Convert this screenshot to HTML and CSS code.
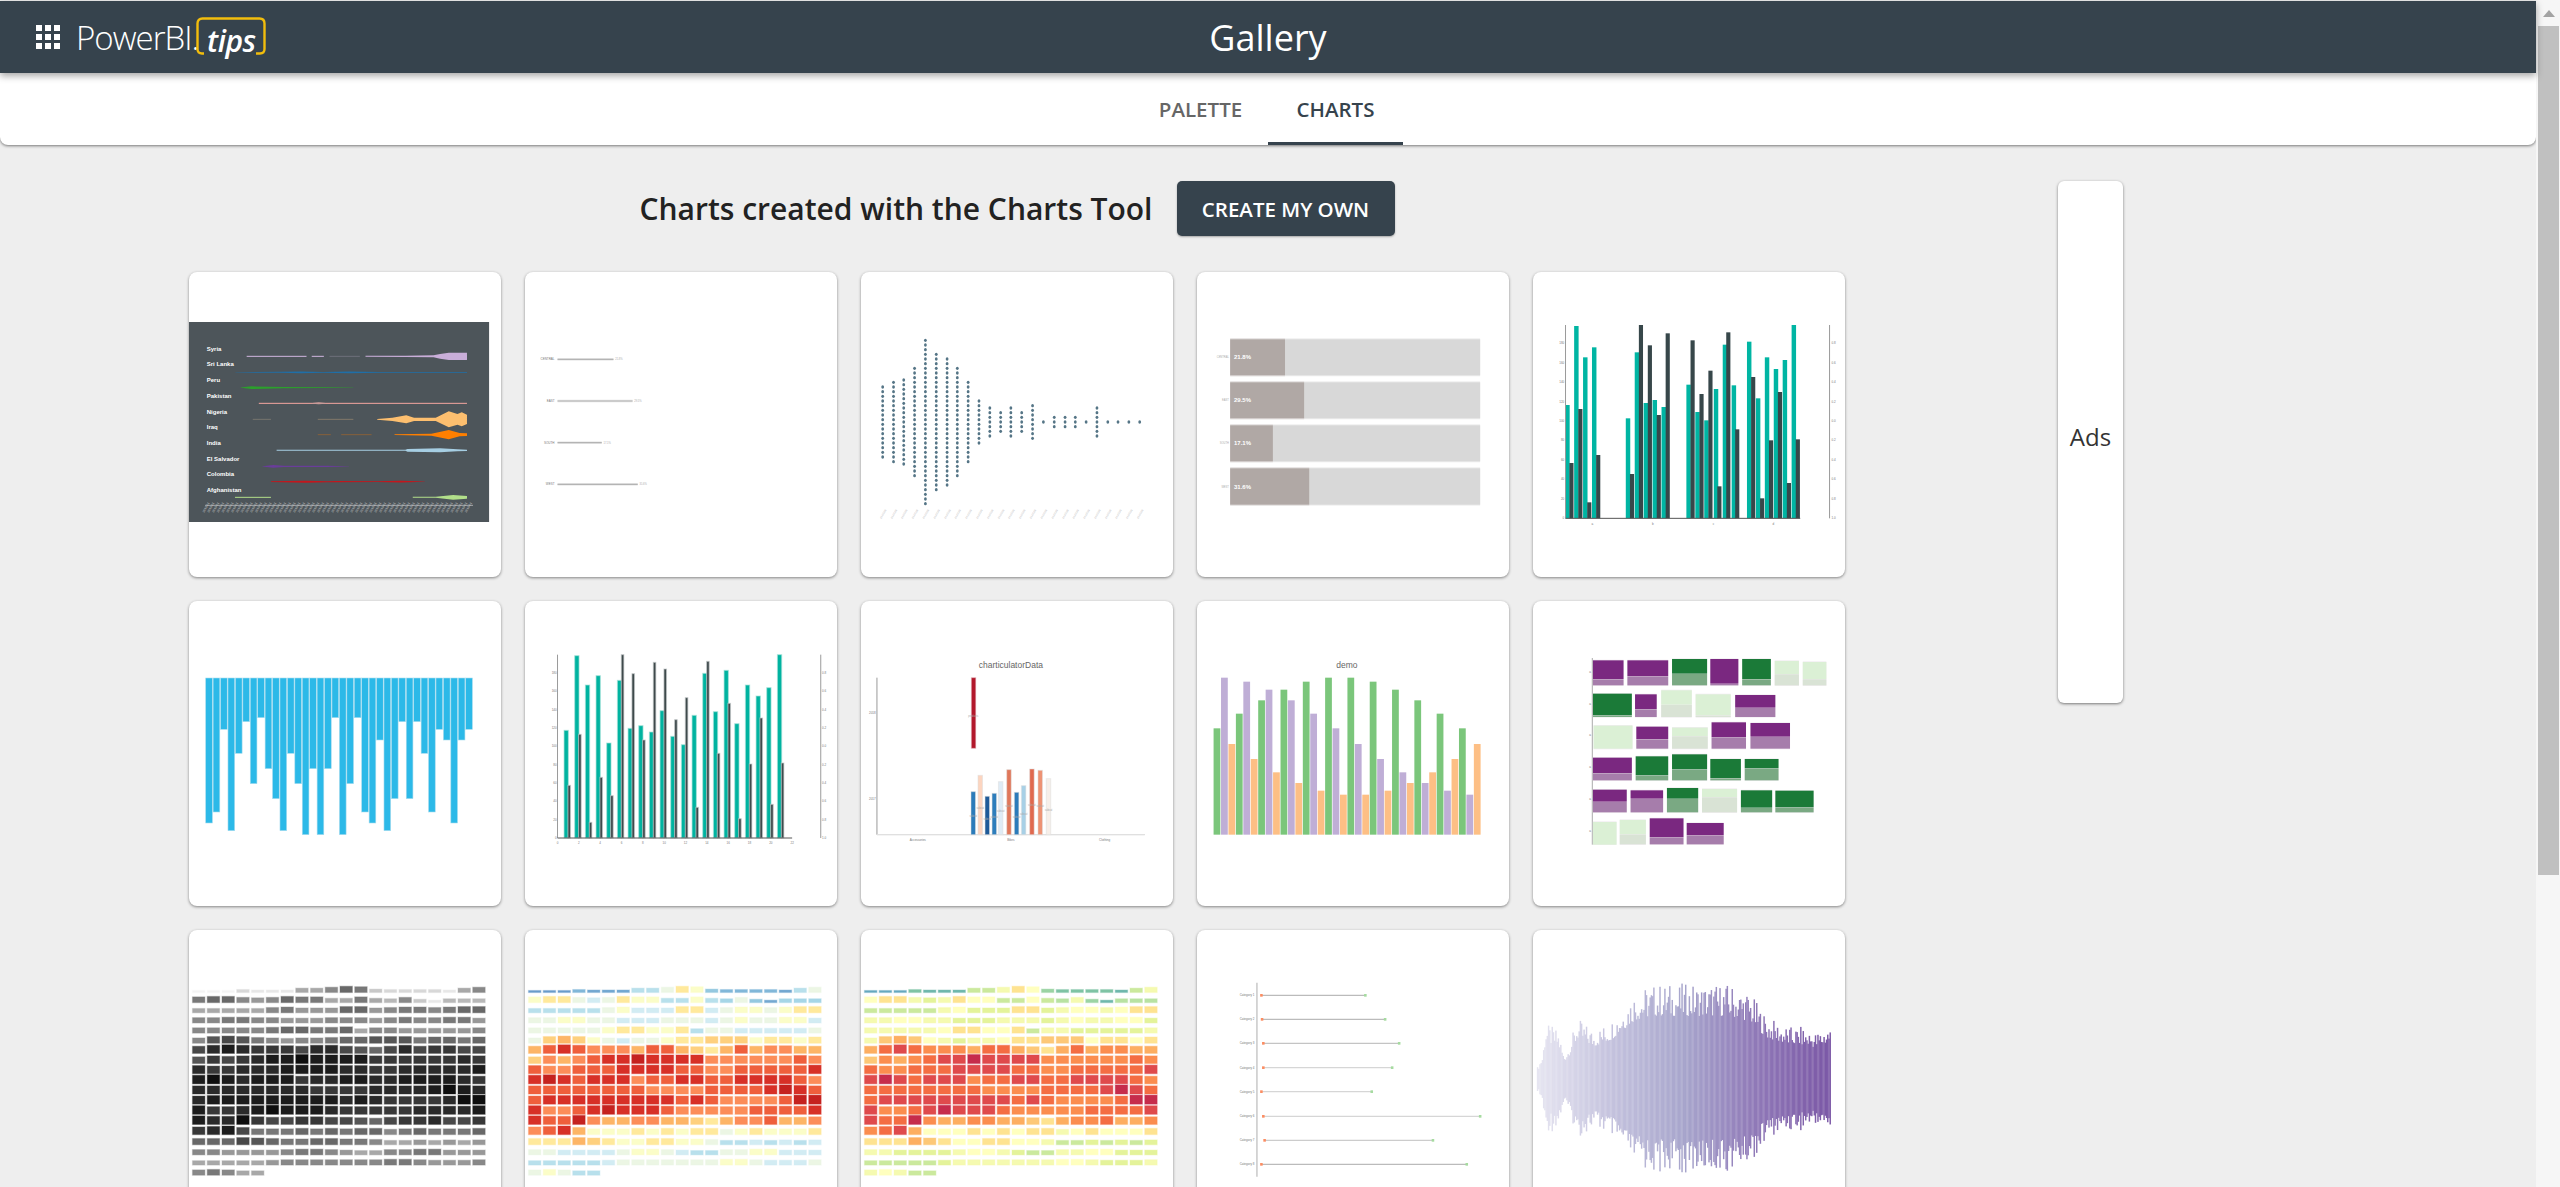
FILE: index.html
```html
<!DOCTYPE html>
<html>
<head lang="en">
    <meta charset="UTF-8">
    <title>Gallery</title>
    <link rel="stylesheet" href="styles.css">
</head>
<body>
<div class="shell">
    <div class="page">
        <header class="topbar">
            <div class="brand">
                <svg class="apps" viewBox="0 0 24 24">
                    <rect x="0" y="0" width="6" height="6"/><rect x="9" y="0" width="6" height="6"/><rect x="18" y="0" width="6" height="6"/>
                    <rect x="0" y="9" width="6" height="6"/><rect x="9" y="9" width="6" height="6"/><rect x="18" y="9" width="6" height="6"/>
                    <rect x="0" y="18" width="6" height="6"/><rect x="9" y="18" width="6" height="6"/><rect x="18" y="18" width="6" height="6"/>
                </svg>
                <span class="brand-name">PowerBI.</span>
                <span class="brand-tips">
                    <svg class="bracket" viewBox="0 0 70 38">
                        <path d="M8 36.5 H6 Q1.5 36.5 1.5 32 V6.5 Q1.5 1.5 6.5 1.5 H63.5 Q68.5 1.5 68.5 6.5 V32 Q68.5 36.5 64 36.5 H60"/>
                    </svg>
                    tips
                </span>
            </div>
            <h1 class="title">Gallery</h1>
            <div></div>
        </header>
        <nav class="tabbar">
            <a class="tab">PALETTE</a>
            <a class="tab active">CHARTS</a>
        </nav>
        <div class="content">
            <main class="gallery">
                <div class="intro">
                    <h2>Charts created with the Charts Tool</h2>
                    <a class="btn">CREATE MY OWN</a>
                </div>
                <div class="cards">
                    <div class="card"><svg class="chart" id="chart1" viewBox="0 0 312 305"></svg></div>
                    <div class="card"><svg class="chart" id="chart2" viewBox="0 0 312 305"></svg></div>
                    <div class="card"><svg class="chart" id="chart3" viewBox="0 0 312 305"></svg></div>
                    <div class="card"><svg class="chart" id="chart4" viewBox="0 0 312 305"></svg></div>
                    <div class="card"><svg class="chart" id="chart5" viewBox="0 0 312 305"></svg></div>
                    <div class="card"><svg class="chart" id="chart6" viewBox="0 0 312 305"></svg></div>
                    <div class="card"><svg class="chart" id="chart7" viewBox="0 0 312 305"></svg></div>
                    <div class="card"><svg class="chart" id="chart8" viewBox="0 0 312 305"></svg></div>
                    <div class="card"><svg class="chart" id="chart9" viewBox="0 0 312 305"></svg></div>
                    <div class="card"><svg class="chart" id="chart10" viewBox="0 0 312 305"></svg></div>
                    <div class="card"><svg class="chart" id="chart11" viewBox="0 0 312 305"></svg></div>
                    <div class="card"><svg class="chart" id="chart12" viewBox="0 0 312 305"></svg></div>
                    <div class="card"><svg class="chart" id="chart13" viewBox="0 0 312 305"></svg></div>
                    <div class="card"><svg class="chart" id="chart14" viewBox="0 0 312 305"></svg></div>
                    <div class="card"><svg class="chart" id="chart15" viewBox="0 0 312 305"></svg></div>
                </div>
            </main>
            <aside class="ads">Ads</aside>
        </div>
    </div>
    <div class="scrollbar">
        <div class="scroll-up"></div>
        <div class="scroll-thumb"></div>
    </div>
</div>
<script src="charts.js"></script>
</body>
</html>
```

FILE: styles.css
```css
*{
    margin:0;
    padding:0;
    box-sizing:border-box;
}
body{
    background:#eee;
    font-family:"Open Sans","Liberation Sans",sans-serif;
    overflow:hidden;
}
.shell{
    display:flex;
    height:100vh;
    overflow:hidden;
}
.page{
    flex:1;
    min-width:0;
    padding-top:1px;
}

/* top bar */
.topbar{
    height:72px;
    background:#36434d;
    color:#fff;
    display:grid;
    grid-template-columns:1fr auto 1fr;
    align-items:center;
    position:relative;
    z-index:2;
    box-shadow:0 3px 7px rgba(0,0,0,.35);
}
.brand{
    display:flex;
    align-items:center;
    padding-left:36px;
}
.apps{
    width:24px;
    height:24px;
    fill:#fff;
    margin-right:16px;
}
.brand-name{
    font-size:33px;
    font-weight:300;
    letter-spacing:-1px;
}
.brand-tips{
    position:relative;
    width:70px;
    height:38px;
    margin:-3px 0 0 -2px;
    font-size:30px;
    font-style:italic;
    font-weight:600;
    line-height:48px;
    text-align:center;
    letter-spacing:-.5px;
}
.bracket{
    position:absolute;
    left:0;
    top:0;
    width:70px;
    height:38px;
    fill:none;
    stroke:#f2bd0c;
    stroke-width:2.4;
}
.title{
    font-size:36px;
    font-weight:400;
}

/* tabs */
.tabbar{
    height:72px;
    background:#fff;
    border-radius:0 0 8px 8px;
    box-shadow:0 1px 3px rgba(0,0,0,.5);
    display:flex;
    justify-content:center;
}
.tab{
    width:135px;
    display:flex;
    align-items:center;
    justify-content:center;
    padding-top:2px;
    font-size:20.5px;
    font-weight:600;
    color:#666;
    border-bottom:3px solid transparent;
}
.tab.active{
    color:#36434d;
    border-bottom-color:#36434d;
}

/* gallery */
.content{
    display:flex;
    align-items:flex-start;
    gap:213px;
    padding:36px 0 0 189px;
}
.gallery{
    width:1656px;
    flex:none;
}
.intro{
    display:flex;
    align-items:center;
    justify-content:center;
    gap:24px;
    height:55px;
    margin-bottom:36px;
}
.intro h2{
    font-size:30px;
    font-weight:600;
    color:#222;
}
.btn{
    width:218px;
    height:55px;
    display:flex;
    align-items:center;
    justify-content:center;
    background:#36434d;
    color:#fff;
    font-size:20.5px;
    font-weight:600;
    border-radius:5px;
    box-shadow:0 1px 2px rgba(0,0,0,.3);
}
.cards{
    display:grid;
    grid-template-columns:repeat(5,312px);
    grid-auto-rows:305px;
    gap:24px;
}
.card{
    background:#fff;
    border-radius:8px;
    box-shadow:0 1px 3px rgba(0,0,0,.45);
    overflow:hidden;
}
.chart{
    display:block;
    width:312px;
    height:305px;
}
.chart text{
    font-family:"Liberation Sans",sans-serif;
    fill:#777;
    font-size:3px;
}
.chart text.dark-label{
    fill:#fff;
    font-size:6px;
    font-weight:700;
}
.chart text.tick-white{
    fill:#ddd;
    font-size:3px;
}
.chart text.value{
    fill:#fff;
    font-size:6px;
    font-weight:700;
}
.chart text.faint{
    fill:#aaa;
    font-size:2.6px;
}
.chart text.heading{
    fill:#666;
    font-size:8.5px;
}
.ads{
    width:65px;
    height:522px;
    flex:none;
    display:flex;
    align-items:center;
    justify-content:center;
    padding-bottom:12px;
    background:#fff;
    color:#333;
    font-size:24px;
    border-radius:6px;
    box-shadow:0 1px 3px rgba(0,0,0,.5);
}

/* scrollbar drawn by hand, the screenshot has one */
.scrollbar{
    width:24px;
    flex:none;
    background:#f6f6f6;
    padding-left:2px;
    padding-right:1px;
}
.scroll-up{
    height:26px;
    display:flex;
    justify-content:center;
    padding-top:10px;
}
.scroll-up:before{
    content:"";
    height:0;
    border-left:6px solid transparent;
    border-right:6px solid transparent;
    border-bottom:7px solid #a3a3a3;
}
.scroll-thumb{
    height:849px;
    background:#c0c0c0;
}
```

FILE: charts.js
```js
// small drawing helper, coordinates are the ones read from the reference
function Pen(ox, oy, sx){
    this.ox = ox;
    this.oy = oy;
    this.sx = sx;
    this.out = '';
}
Pen.prototype.x = function(z){
    return +((z - this.ox) / this.sx).toFixed(2);
};
Pen.prototype.y = function(z){
    return +((z - this.oy) / 3).toFixed(2);
};
Pen.prototype.rect = function(x0, y0, x1, y1, fill, stroke, opacity, sw){
    this.out += '<rect x="' + this.x(x0) + '" y="' + this.y(y0) + '" width="' + ((x1 - x0) / this.sx).toFixed(2) +
        '" height="' + ((y1 - y0) / 3).toFixed(2) + '" fill="' + fill + '"' +
        (stroke ? ' stroke="' + stroke + '" stroke-width="' + (sw || 1) + '"' + (opacity ? ' stroke-opacity="' + opacity + '"' : '') : '') + '/>';
};
Pen.prototype.line = function(x0, y0, x1, y1, color, w){
    this.out += '<line x1="' + this.x(x0) + '" y1="' + this.y(y0) + '" x2="' + this.x(x1) + '" y2="' + this.y(y1) +
        '" stroke="' + color + '" stroke-width="' + (w || 1) + '"/>';
};
Pen.prototype.text = function(x, y, str, cls, anchor, rot){
    var px = this.x(x), py = this.y(y);
    this.out += '<text x="' + px + '" y="' + py + '"' + (cls ? ' class="' + cls + '"' : '') +
        (anchor ? ' text-anchor="' + anchor + '"' : '') +
        (rot ? ' transform="rotate(' + rot + ' ' + px + ' ' + py + ')"' : '') + '>' + str + '</text>';
};
// shape mirrored round a horizontal line
Pen.prototype.violin = function(y, pts, color, opacity){
    var top = [], bottom = [], i;
    for(i = 0; i < pts.length; i++){
        top.push(this.x(pts[i][0]) + ',' + this.y(y - pts[i][1]));
        bottom.unshift(this.x(pts[i][0]) + ',' + this.y(y + pts[i][1]));
    }
    this.out += '<polygon points="' + top.concat(bottom).join(' ') + '" fill="' + color + '"' +
        (opacity ? ' opacity="' + opacity + '"' : '') + '/>';
};
Pen.prototype.done = function(id){
    document.getElementById(id).innerHTML = this.out;
};

function noise(i){
    var s = Math.sin(i * 12.9898) * 43758.5453;
    return s - Math.floor(s);
}

// violins on dark
function chart1(){
    var p = new Pen(21, 36, 2.306), i;
    p.rect(21, 186, 713, 786, '#4d555a');
    var names = [['Syria', 267], ['Sri Lanka', 311], ['Peru', 359], ['Pakistan', 407], ['Nigeria', 455],
        ['Iraq', 500], ['India', 548], ['El Salvador', 596], ['Colombia', 641], ['Afghanistan', 690]];
    for(i = 0; i < names.length; i++){
        p.text(62, names[i][1] + 6, names[i][0], 'dark-label');
    }
    // syria
    p.line(154, 289, 292, 289, '#d0b6e0', 1);
    p.line(304, 289, 332, 289, '#d0b6e0', 1);
    p.line(345, 289, 415, 289, '#8f8a9a', .5);
    p.violin(289, [[428, 1.5], [520, 2], [585, 3], [600, 7], [620, 11], [662, 11]], '#c9aed9');
    // sri lanka
    p.violin(337, [[128, .5], [230, 1.5], [280, 2.5], [330, 1], [390, 2.5], [460, 1], [662, 1]], '#1f6fa8');
    // peru
    p.violin(383, [[140, .5], [165, 4], [240, 2], [330, 1], [400, .2]], '#2ca02c');
    // pakistan
    p.line(182, 430, 662, 430, '#f4a6a0', 1);
    p.violin(430, [[305, 1], [320, 3], [336, 1]], '#c99a98');
    // nigeria
    p.line(168, 478, 210, 478, '#8a8478', .7);
    p.line(318, 478, 400, 478, '#9a8a72', .7);
    p.violin(478, [[455, 1], [490, 5], [522, 12], [540, 5], [590, 5], [620, 24], [640, 16], [650, 21], [662, 14]], '#fdbf6f');
    // iraq
    p.line(318, 524, 348, 524, '#a0652c', .7);
    p.line(372, 524, 442, 524, '#a0652c', .7);
    p.violin(524, [[495, 1], [580, 3], [620, 14], [645, 5], [662, 4]], '#ff7f00');
    // india
    p.violin(571, [[223, 1.5], [520, 1.5], [525, 4], [600, 6], [640, 3], [662, 2]], '#a6cee3');
    // el salvador
    p.violin(619, [[190, .4], [215, 4], [240, 2], [340, 2], [390, .2]], '#6a3d9a');
    // colombia
    p.violin(665, [[210, 1], [290, 3], [340, 1.5], [360, 2], [455, 1], [510, 2.5], [565, .4]], '#c4161c');
    // afghanistan
    p.line(127, 712, 210, 712, '#b2df8a', 1);
    p.violin(712, [[537, 1.5], [590, 1.5], [630, 7], [662, 4]], '#b2df8a');
    // date axis
    p.line(58, 736, 676, 736, '#a5a9ac', 1);
    for(i = 0; i < 56; i++){
        p.text(56 + i * 11, 758, '2015-01', 'tick-white', null, -60);
    }
    p.done('chart1');
}

function chart2(){
    var p = new Pen(796, 36, 2.306);
    var rows = [['CENTRAL', 298, 1000, '21.8%'], ['EAST', 423, 1044, '29.5%'], ['SOUTH', 548, 973, '17.1%'], ['WEST', 673, 1056, '31.6%']];
    for(var i = 0; i < rows.length; i++){
        p.text(864, rows[i][1] + 3, rows[i][0], null, 'end');
        p.line(871, rows[i][1], rows[i][2], rows[i][1], '#e2e2e2', 2.4);
        p.line(871, rows[i][1], rows[i][2], rows[i][1], '#b4b4b4', 1.1);
        p.text(rows[i][2] + 4, rows[i][1] + 3, rows[i][3], 'faint');
    }
    p.done('chart2');
}

// dots, each column is x, top, bottom
function chart3(){
    var p = new Pen(17, 36, 1.568);
    var cols = [[51, 382, 590], [68, 368, 604], [84, 362, 610], [101, 325, 645], [118, 240, 730], [135, 283, 688], [152, 297, 674],
        [168, 325, 645], [185, 368, 604], [202, 420, 552], [219, 447, 525], [236, 462, 511], [252, 447, 525], [269, 462, 511],
        [286, 440, 532], [303, 486, 486], [320, 470, 503], [337, 470, 503], [353, 476, 497], [370, 486, 486], [387, 447, 525],
        [404, 486, 486], [420, 486, 486], [437, 486, 486], [454, 486, 486]];
    for(var i = 0; i < cols.length; i++){
        var n = Math.round((cols[i][2] - cols[i][1]) / 14);
        var top = 486 - n * 7;
        for(var j = 0; j <= n; j++){
            p.out += '<ellipse cx="' + p.x(cols[i][0]) + '" cy="' + p.y(top + j * 14) + '" rx="1.4" ry="1.7" fill="#557586"/>';
        }
        p.text(cols[i][0] - 2, 776, '01/01/20', 'faint', null, -60);
    }
    p.done('chart3');
}

function chart4(){
    var p = new Pen(544, 36, 1.568);
    var rows = [['CENTRAL', 235, 349, 682, '21.8%'], ['EAST', 364, 478, 712, '29.5%'], ['SOUTH', 493, 607, 663, '17.1%'], ['WEST', 622, 737, 720, '31.6%']];
    for(var i = 0; i < rows.length; i++){
        var r = rows[i];
        p.rect(596, r[1], 988, r[2], '#eeeeee');
        p.rect(596, r[1] + 3, 988, r[2] - 3, '#d8d8d8');
        p.rect(596, r[1], r[3], r[2], '#e3dfde');
        p.rect(596, r[1] + 3, r[3], r[2] - 3, '#b0a8a5');
        p.text(594, (r[1] + r[2]) / 2 + 3, r[0], 'faint', 'end');
        p.text(602, (r[1] + r[2]) / 2 + 6, r[4], 'value');
    }
    p.done('chart4');
}

function axes(p, left, right, top, bottom, labelsLeft, labelsRight, step){
    var i;
    p.line(left, top, left, bottom, '#9a9a9a', 1);
    p.line(left, bottom, right[0], bottom, '#555', 1);
    p.line(right[1], top, right[1], bottom, '#9a9a9a', 1);
    for(i = 0; i < labelsLeft.length; i++){
        p.text(left - 2, bottom - i * step + 3, labelsLeft[i], null, 'end');
    }
    for(i = 0; i < labelsRight.length; i++){
        p.text(right[1] + 3, bottom - i * step + 3, labelsRight[i]);
    }
}

function chart5(){
    var p = new Pen(1071, 36, 1.568), i;
    var teal = [[1125, 435], [1139, 198], [1153, 292], [1167, 262], [1220, 475], [1234, 277], [1248, 429], [1262, 420], [1276, 441],
        [1315, 374], [1329, 456], [1343, 481], [1358, 387], [1372, 254], [1386, 376],
        [1410, 245], [1424, 415], [1438, 292], [1452, 327], [1466, 300], [1480, 195]];
    var dark = [[1131, 609], [1145, 447], [1159, 727], [1173, 585], [1226, 642], [1240, 195], [1254, 256], [1268, 465], [1282, 220],
        [1321, 241], [1335, 402], [1349, 332], [1363, 679], [1377, 217], [1391, 508],
        [1416, 351], [1430, 715], [1444, 541], [1458, 396], [1472, 669], [1486, 538]];
    for(i = 0; i < teal.length; i++){
        p.rect(teal[i][0] - 3.5, teal[i][1], teal[i][0] + 3.5, 775, '#00b5a3');
    }
    for(i = 0; i < dark.length; i++){
        p.rect(dark[i][0] - 3, dark[i][1], dark[i][0] + 3.5, 775, '#37474a');
    }
    axes(p, 1122, [1490, 1536], 195, 775, [0, 20, 40, 60, 80, 100, 120, 140, 160, 180],
        ['1.0', '0.8', '0.6', '0.4', '0.2', '0.0', '0.2', '0.4', '0.6', '0.8'], 58.4);
    var names = ['a', 'b', 'c', 'd'], xs = [1164, 1259, 1354, 1448];
    for(i = 0; i < 4; i++){
        p.text(xs[i], 794, names[i], null, 'middle');
    }
    p.done('chart5');
}

function chart6(){
    var p = new Pen(21, 2, 2.306);
    var ends = [668, 635, 387, 691, 459, 364, 550, 352, 505, 595, 691, 459, 550, 703, 505, 703, 505, 352,
        703, 550, 352, 635, 668, 419, 691, 595, 364, 595, 364, 459, 635, 387, 419, 668, 419, 387];
    for(var i = 0; i < ends.length; i++){
        var x = 59.5 + i * 17.13;
        p.rect(x, 233, x + 15.4, ends[i], '#2cb9e8', '#a8dcee', null, .6);
    }
    p.done('chart6');
}

function chart7(){
    var p = new Pen(796, 2, 2.306), i;
    var teal = [390, 166, 254, 226, 428, 240, 384, 376, 395, 331, 408, 433, 345, 219, 334, 210, 370, 254, 287, 262, 163];
    var dark = [555, 402, 666, 531, 586, 163, 220, 419, 186, 206, 358, 292, 621, 183, 459, 309, 655, 491, 353, 612, 488];
    for(i = 0; i < teal.length; i++){
        var x = 891 + i * 24.6;
        p.rect(x - 5, teal[i], x + 5, 713, '#00b3a0', '#a8e3da', .7);
        p.rect(x + 4, dark[i], x + 10, 713, '#3f4a4c', '#c5c9ca', .7);
    }
    axes(p, 871, [1412, 1478], 163, 713, [0, 20, 40, 60, 80, 100, 120, 140, 160, 180],
        ['1.0', '0.8', '0.6', '0.4', '0.2', '0.0', '0.2', '0.4', '0.6', '0.8'], 55);
    for(i = 0; i < 12; i++){
        p.text(871 + i * 49.2, 732, i * 2, null, 'middle');
    }
    p.done('chart7');
}

function chart8(){
    var p = new Pen(17, 2, 1.568), i;
    p.text(252, 203, 'charticulatorData', 'heading', 'middle');
    p.line(42, 232, 42, 703, '#9a9a9a', 1);
    p.line(42, 703, 462, 703, '#bbb', 1);
    p.rect(42, 701, 462, 703, '#eeeeee');
    p.text(40, 341, '2018', null, 'end');
    p.text(40, 599, '2017', null, 'end');
    p.text(106, 721, 'Accessories', null, 'middle');
    p.text(252, 721, 'Bikes', null, 'middle');
    p.text(399, 721, 'Clothing', null, 'middle');
    p.rect(190, 232, 197, 444, '#b2182b', '#e8c0c5', .5);
    p.text(193, 351, 'products', 'faint', 'middle');
    var bars = [[193, 574, '#2b7bba'], [204, 525, '#fcd5c0'], [215, 588, '#1f5b99'], [226, 579, '#2e7ebc'], [236, 544, '#dfebf5'],
        [249, 508, '#e0775a'], [261, 576, '#2b7bba'], [272, 556, '#a8d0e6'], [285, 506, '#e0694f'], [298, 510, '#ee9273'], [311, 535, '#f7efe9']];
    var tags = [650, 625, 658, 652, 634, 620, 652, 643, 616, 620, 632];
    for(i = 0; i < bars.length; i++){
        p.rect(bars[i][0] - 3.5, bars[i][1], bars[i][0] + 3.5, 703, bars[i][2], '#dddddd', .5);
        p.text(bars[i][0], tags[i], 'subcat', 'faint', 'middle');
    }
    p.done('chart8');
}

function chart9(){
    var p = new Pen(544, 2, 1.568);
    var tops = [384, 232, 431, 340, 244, 476, 300, 268, 516, 268, 300, 548, 244, 340, 571, 232, 384, 583,
        232, 431, 583, 244, 476, 571, 268, 516, 548, 300, 548, 516, 340, 571, 476, 384, 583, 431];
    var colors = ['#7bc67b', '#bfaed6', '#fdbf85'];
    p.text(779, 203, 'demo', 'heading', 'middle');
    for(var i = 0; i < tops.length; i++){
        var x = 570 + i * 11.66;
        p.rect(x, tops[i], x + 10.6, 703, colors[i % 3]);
    }
    p.done('chart9');
}

function chart10(){
    var p = new Pen(1071, 2, 1.568), i, j;
    var kinds = {
        P: ['#7a2880', '#a67dab'],
        G: ['#1b7a38', '#7aa983'],
        L: ['#dbf0d5', '#d9e3d5']
    };
    var rows = [
        [257, [1165, 1213, 178, 236, 'P'], [1219, 1283, 178, 228, 'P'], [1289, 1344, 174, 220, 'G'], [1349, 1393, 174, 250, 'P'], [1399, 1444, 174, 236, 'G'], [1450, 1488, 180, 221, 'L'], [1494, 1531, 183, 236, 'L']],
        [352, [1165, 1226, 278, 345, 'G'], [1231, 1265, 280, 326, 'P'], [1272, 1320, 268, 313, 'L'], [1326, 1381, 280, 345, 'L'], [1388, 1451, 282, 322, 'P']],
        [447, [1166, 1227, 374, 445, 'L'], [1233, 1283, 377, 416, 'P'], [1289, 1345, 380, 407, 'L'], [1351, 1405, 364, 411, 'P'], [1412, 1474, 366, 409, 'P']],
        [542, [1165, 1226, 470, 518, 'P'], [1232, 1283, 466, 525, 'G'], [1289, 1344, 460, 507, 'G'], [1349, 1397, 474, 533, 'G'], [1403, 1456, 474, 504, 'G']],
        [638, [1165, 1218, 566, 604, 'P'], [1224, 1275, 568, 595, 'P'], [1281, 1330, 561, 595, 'G'], [1336, 1391, 564, 590, 'L'], [1397, 1446, 568, 622, 'G'], [1451, 1511, 569, 621, 'G']],
        [734, [1165, 1202, 663, 733, 'L'], [1207, 1248, 657, 702, 'L'], [1254, 1307, 652, 711, 'P'], [1312, 1370, 666, 705, 'P']]
    ];
    p.line(1164, 173, 1164, 733, '#aaa', 1);
    var marks = [215, 310, 405, 500, 596, 691];
    for(i = 0; i < rows.length; i++){
        var bottom = rows[i][0];
        p.text(1162, marks[i] + 3, 'a', null, 'end');
        for(j = 1; j < rows[i].length; j++){
            var t = rows[i][j], k = kinds[t[4]];
            p.rect(t[0], t[2], t[1], bottom, '#f1edf1');
            p.rect(t[0], t[2] + 2, t[1], t[3], k[0]);
            p.rect(t[0], t[3] + 1, t[1], bottom - 2, k[1]);
        }
    }
    p.done('chart10');
}

// same values in all three heat maps, hex digit per cell
var heatRows = [
    '00021115579832222157', '89976798855854731444', '55555786669967887899', '77887766677767877886',
    '77777899889577666667', '7aba87677899aaa89989', 'bdedcccbddba9bdbccbb', 'acbcdeefeeeeccccccdc',
    'dccdddeeeeddccddddde', 'efedeeecddeeddeeeedc', 'ddddddddccccddddefed', 'deeeeeeeeededccccdff',
    'eccdefeeedcccccdddde', 'eddfcbbccbba9bccdbbc', 'cdeb8889898997898889', '999ba988998875565656',
    '77666678876557788666', '55555677777778876667', '78755'
];
var greys = ['#f4f4f4', '#e8e8e8', '#d8d8d8', '#c8c8c8', '#b8b8b8', '#a8a8a8', '#989898', '#888888',
    '#787878', '#686868', '#565656', '#484848', '#383838', '#2a2a2a', '#1c1c1c', '#0e0e0e'];
var rdYlBu = ['#6a9ccb', '#74a8d1', '#82b8d9', '#94c8e0', '#a6d6e7', '#b8e0ec', '#d2ecf3', '#ecf6e4',
    '#fbfdc8', '#ffe99c', '#fed07e', '#fdb566', '#fc8d59', '#ef5f3c', '#d73027', '#c5221f'];
var spectral = ['#66a9c0', '#6fb8ad', '#7fc4a5', '#9bd4a4', '#b8e2a2', '#cbe99d', '#e4f39a', '#f5fab0',
    '#ffffbf', '#fee391', '#fdc877', '#fdae61', '#fb8d4f', '#f46d43', '#df4a4c', '#c62c4c'];

function heat(id, palette){
    var p = new Pen(0, 0, 1);
    for(var r = 0; r < heatRows.length; r++){
        for(var c = 0; c < heatRows[r].length; c++){
            var v = parseInt(heatRows[r].charAt(c), 16);
            var h = 2 + v * .47;
            var bottom = 62.5 + r * 10.15;
            p.out += '<rect x="' + (3.5 + c * 14.75) + '" y="' + (bottom - h).toFixed(2) + '" width="12.4" height="' + h.toFixed(2) +
                '" fill="' + palette[v] + '" stroke="' + palette[v] + '" stroke-opacity=".35" stroke-width="1.2"/>';
        }
    }
    p.done(id);
}

function chart14(){
    var p = new Pen(544, 30, 1.568);
    var rows = [[226, 645, 808, '#bbb'], [298, 646, 839, '#bbb'], [370, 648, 861, '#c4c4c4'], [443, 648, 850, '#d6d6d6'],
        [515, 645, 818, '#d6d6d6'], [589, 648, 988, '#d6d6d6'], [661, 650, 914, '#ccc'], [733, 645, 967, '#bbb']];
    p.line(638, 188, 638, 770, '#bbb', 1.2);
    for(var i = 0; i < rows.length; i++){
        var r = rows[i];
        p.text(634, r[0] + 3, 'Category ' + (i + 1), null, 'end');
        p.line(r[1], r[0], r[2], r[0], r[3], 1.3);
        p.rect(r[1] - 2, r[0] - 4, r[1] + 2, r[0] + 4, '#fc8d62');
        p.rect(r[2] - 2, r[0] - 4, r[2] + 2, r[0] + 4, '#a6dba0');
    }
    p.done('chart14');
}

// colour runs pale, blue-grey, then purple from left to right
function waveColor(k){
    var stops = [[230, 229, 241], [197, 195, 222], [167, 165, 204], [143, 120, 183], [123, 88, 166]];
    var f = k * (stops.length - 1), n = Math.min(stops.length - 2, Math.floor(f));
    f = f - n;
    return 'rgb(' + Math.round(stops[n][0] + (stops[n + 1][0] - stops[n][0]) * f) + ',' +
        Math.round(stops[n][1] + (stops[n + 1][1] - stops[n][1]) * f) + ',' +
        Math.round(stops[n][2] + (stops[n + 1][2] - stops[n][2]) * f) + ')';
}

function chart15(){
    var p = new Pen(1071, 30, 1.568);
    var edge = [[1077, 440], [1085, 400], [1090, 310], [1110, 330], [1118, 400], [1125, 380], [1140, 295], [1165, 330], [1190, 305], [1205, 270],
        [1230, 210], [1262, 190], [1305, 190], [1378, 190], [1410, 215], [1436, 290], [1470, 320], [1490, 320], [1515, 335], [1536, 310]];
    var seg = 0;
    for(var i = 0; i < 240; i++){
        var x = 1077 + i * 1.92;
        while(seg < edge.length - 2 && x > edge[seg + 1][0]){
            seg++;
        }
        var t = (x - edge[seg][0]) / (edge[seg + 1][0] - edge[seg][0]);
        var half = 478 - (edge[seg][1] + (edge[seg + 1][1] - edge[seg][1]) * t);
        // long spikes are rare, most bars stay well under the envelope
        half = half * (.66 + .34 * Math.pow(noise(i + 1), 1.6));
        p.rect(x, 478 - half, x + 2.3, 478 + half * (.94 + .06 * noise(i + 50)), waveColor(i / 239));
    }
    p.done('chart15');
}

chart1();
chart2();
chart3();
chart4();
chart5();
chart6();
chart7();
chart8();
chart9();
chart10();
heat('chart11', greys);
heat('chart12', rdYlBu);
heat('chart13', spectral);
chart14();
chart15();
```
